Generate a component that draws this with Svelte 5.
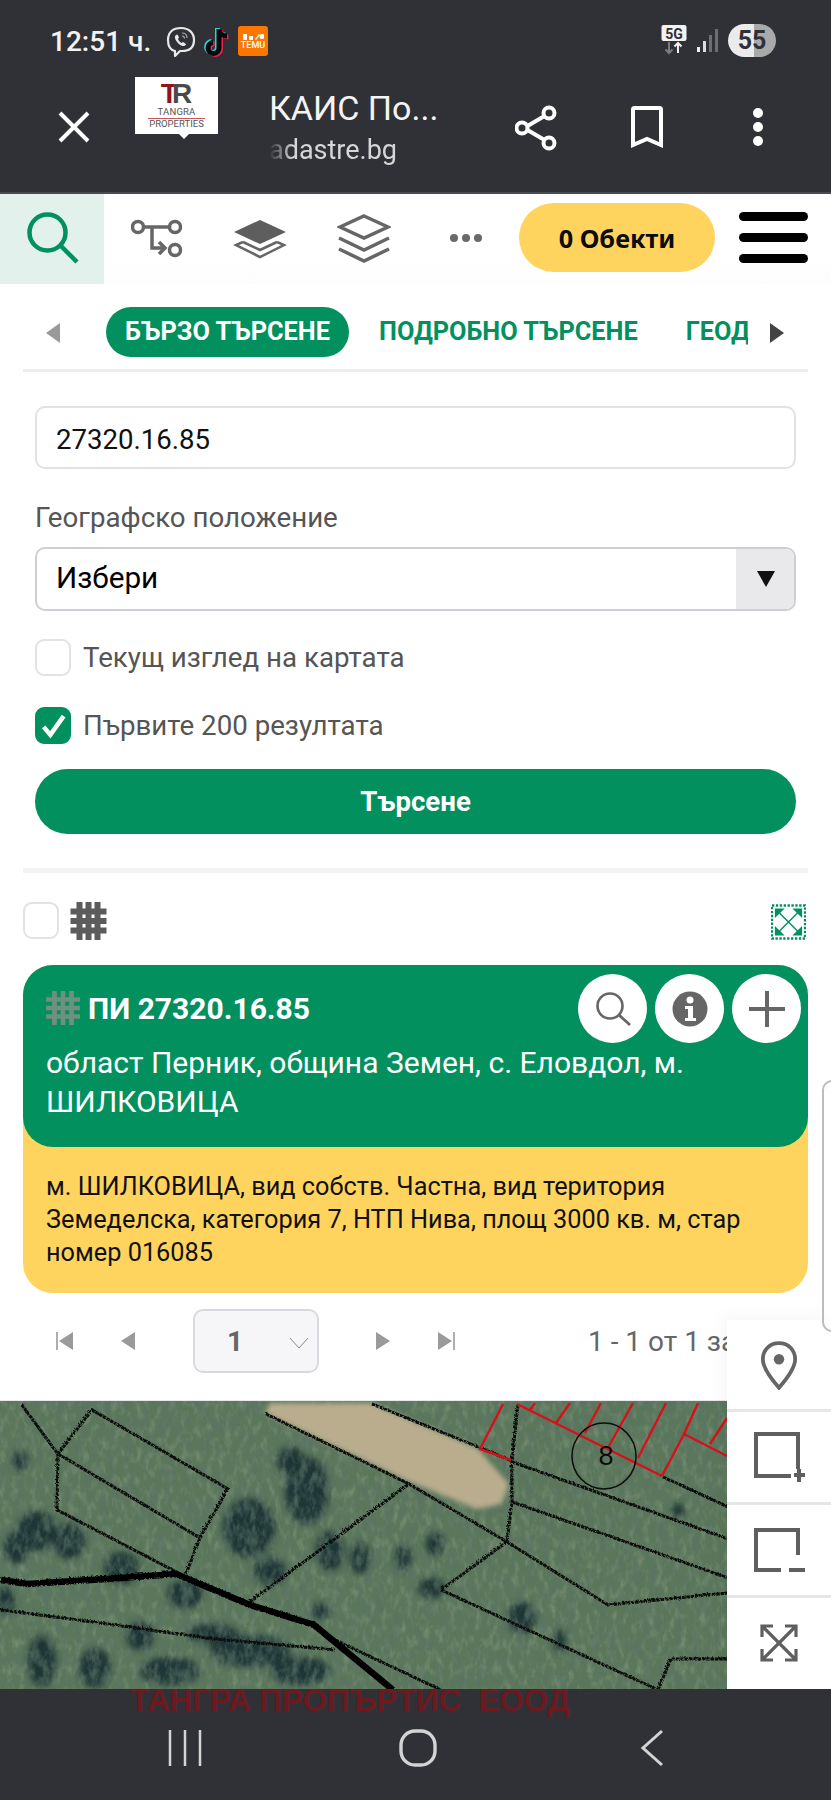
<script>
  const thin = [
    'M21 3L57 52L91 8L227 87L199 136L185 172','M57 52L199 136','M57 52L56 108L185 175',
    'M249 200L408 82','M265 12L408 82L506 140','M371 2L482 47L511 59','M517 3L511 60L511 100L506 140',
    'M506 140L440 188L657 288','M506 140L607 203L727 191','M511 100L727 176','M511 60L727 137','M662 75L727 105',
    'M657 288L670 257L727 257','M0 208L106 222L212 237L334 248','M323 233L440 288'
  ];
  const red = [
    'M517 3L662 75','M503 3L480 48L511 59','M662 75L684 33L727 55','M535 2L530 9','M570 2L556 22','M601 2L585 32',
    'M633 2L609 45','M666 2L638 57','M698 2L684 33','M727 17L710 43'
  ];
  const trees = [
    [249,127,26,30],[307,90,22,34],[37,130,20,20],[16,147,12,16],[69,140,16,18],[122,167,18,16],[291,60,14,14],
    [360,157,10,16],[403,157,8,14],[435,143,9,12],[432,187,14,10],[522,217,14,16],[42,260,14,26],[95,267,16,20],
    [212,233,26,10],[5,200,10,14],[185,193,18,14],[678,110,6,8],[140,235,14,14],[320,210,10,8],[250,250,40,16],[560,240,6,12],
    [330,150,14,20],[20,60,8,10],[270,170,16,14],[170,270,30,14],[300,270,30,14]
  ];
</script>

<div class="page">
  <header class="chrome">
    <div class="status">
      <span class="time">12:51 ч.</span>
      <svg class="st-icon viber" viewBox="0 0 30 32"><path d="M15 2C7 2 2 6 2 14c0 6 2 10 7 11v5l5-5h2c8 0 12-4 12-11S23 2 15 2z" fill="none" stroke="#e8e8e8" stroke-width="2.2" stroke-linejoin="round"/><path d="M10 9c-1.500 1-1.500 3 0 5.500s4 5 6.500 5.500c2 .5 3.500-1 3.500-2l-3-2-1.500 1c-1.500-.8-3-2.500-3.500-4l1-1.500-1.500-3z" fill="#e8e8e8"/><path d="M16 7c3 0 5 2 5 5M16 10c1.500 0 2.500 1 2.500 2.500" fill="none" stroke="#aaa" stroke-width="1.200"/></svg>
      <svg class="st-icon tiktok" viewBox="0 0 28 32"><g fill="none" stroke-width="5"><path d="M16 3v19a5.500 5.500 0 1 1-6-5.500M16 3c0 4 3 7 8 7" stroke="#25d5dc" transform="translate(-1.500 -1)"/><path d="M16 3v19a5.500 5.500 0 1 1-6-5.500M16 3c0 4 3 7 8 7" stroke="#e9234e" transform="translate(1.500 1)"/><path d="M16 3v19a5.500 5.500 0 1 1-6-5.500M16 3c0 4 3 7 8 7" stroke="#0a0a0c"/></g></svg>
      <div class="temu">
        <svg viewBox="0 0 22 7" width="22" height="7"><g fill="#fff"><rect x="1" y="1" width="4" height="6"/><rect x="7" y="3" width="4" height="4"/><path d="M13 6l4-5 1 1-4 5z"/><circle cx="20" cy="3.500" r="2.500"/></g></svg>
        <b>TEMU</b>
      </div>
      <span class="spacer"></span>
      <svg class="net" viewBox="0 0 26 30"><rect x="0.500" y="0" width="25" height="16" rx="2" fill="#f2f2f2"/><text x="13" y="13.500" text-anchor="middle" class="net-t">5G</text><path d="M8 17v11M4.500 24.500L8 28l3.500-3.500" fill="none" stroke="#7c7c7c" stroke-width="2"/><path d="M17 28V18M13.500 21.500L17 18l3.500 3.500" fill="none" stroke="#f2f2f2" stroke-width="2"/></svg>
      <svg class="signal" viewBox="0 0 22 24"><rect x="0" y="18" width="3" height="5" fill="#eee"/><rect x="6" y="12" width="3" height="11" fill="#ddd"/><rect x="12" y="6" width="3" height="17" fill="#6d6e72"/><rect x="18" y="0" width="3" height="23" fill="#6d6e72"/></svg>
      <div class="battery">55</div>
    </div>
    <div class="browser">
      <svg class="close" viewBox="0 0 32 32"><path d="M2 2L30 30M30 2L2 30" stroke="#fff" stroke-width="4"/></svg>
      <div class="logo">
        <div class="tr"><span class="t">T</span><span class="r">R</span></div>
        <div class="lt">TANGRA</div>
        <div class="lb">PROPERTIES</div>
      </div>
      <div class="titles">
        <div class="title">КАИС По...</div>
        <div class="url">adastre.bg</div>
      </div>
      <svg class="act share" viewBox="0 0 42 46"><g fill="none" stroke="#fff" stroke-width="4"><path d="M33 9L9 23L33 37"/><circle cx="34" cy="8" r="5.500" fill="#303136"/><circle cx="7" cy="23" r="5.500" fill="#303136"/><circle cx="34" cy="38" r="5.500" fill="#303136"/></g></svg>
      <svg class="act book" viewBox="0 0 32 42"><path d="M2 3.500Q2 2 3.500 2h25Q30 2 30 3.500V39l-14-6-14 6z" fill="none" stroke="#fff" stroke-width="4"/></svg>
      <div class="kebab"><i></i><i></i><i></i></div>
    </div>
  </header>

  <nav class="toolbar">
    <div class="tool active">
      <svg viewBox="0 0 54 54" class="ti-search"><circle cx="20.500" cy="20.500" r="18" fill="none" stroke="#03905f" stroke-width="4.500"/><path d="M33 33L50 50" stroke="#03905f" stroke-width="4.500"/></svg>
    </div>
    <div class="tool">
      <svg viewBox="0 0 52 40" class="ti-route"><g fill="none" stroke="#666" stroke-width="3.500"><circle cx="7" cy="8" r="5.500"/><circle cx="44" cy="8" r="5.500"/><circle cx="44" cy="31" r="5.500"/><path d="M13 8H38M21 8V29H34M28 23l6 6-6 6"/></g></svg>
    </div>
    <div class="tool">
      <svg viewBox="0 0 54 40" class="ti-layer"><path d="M27 1L53 13L27 25L1 13z" fill="#5e5e5e"/><path d="M10 23L27 31L44 23M10 23L3 26L27 38L51 26L44 23" fill="none" stroke="#666" stroke-width="2.500"/></svg>
    </div>
    <div class="tool">
      <svg viewBox="0 0 54 50" class="ti-stack"><g fill="none" stroke="#666" stroke-width="3.500"><path d="M27 3L51 14L27 25L3 14z"/><path d="M2 25L27 37L52 25M2 36L27 48L52 36"/></g></svg>
    </div>
    <div class="tool more"><i></i><i></i><i></i></div>
    <button class="objects">0 Обекти</button>
    <div class="burger"><i></i><i></i><i></i></div>
  </nav>

  <main class="content">
    <div class="tabs">
      <span class="tri left"></span>
      <div class="tablist">
        <span class="tab on">БЪРЗО ТЪРСЕНЕ</span>
        <span class="tab">ПОДРОБНО ТЪРСЕНЕ</span>
        <span class="tab">ГЕОД</span>
      </div>
      <span class="tri right"></span>
    </div>

    <form class="form">
      <div class="input">27320.16.85</div>
      <div class="label">Географско положение</div>
      <div class="input select"><span>Избери</span><span class="sel-arrow"></span></div>
      <div class="check first"><span class="box"></span><span>Текущ изглед на картата</span></div>
      <div class="check second">
        <span class="box on"><svg viewBox="0 0 24 24"><path d="M5 13l5 6L20 5" fill="none" stroke="#fff" stroke-width="3.400"/></svg></span>
        <span>Първите 200 резултата</span>
      </div>
      <div class="submit">Търсене</div>
    </form>

    <div class="divider"></div>

    <div class="selrow">
      <span class="box"></span>
      <svg class="grid" viewBox="0 0 36 38"><path d="M9 0v38M18 0v38M27 0v38M0 9.500h36M0 19h36M0 28.500h36" stroke="#5c5c5c" stroke-width="6"/></svg>
      <span class="spacer"></span>
      <svg class="expand" viewBox="0 0 36 36"><rect x="1" y="1" width="34" height="34" fill="none" stroke="#03905f" stroke-width="2.400" stroke-dasharray="2.400 1.600"/><path d="M8 8L28 28M28 8L8 28" stroke="#03905f" stroke-width="1.500"/><path d="M4 4h10L4 14zM32 4H22l10 10zM4 32h10L4 22zM32 32H22l10-10z" fill="#03905f"/></svg>
    </div>

    <section class="card">
      <div class="card-head">
        <div class="head-title">
          <svg class="hgrid" viewBox="0 0 36 36"><path d="M9 0v36M18 0v36M27 0v36M0 9h36M0 18h36M0 27h36" stroke="#6f8f80" stroke-width="5"/></svg>
          <span>ПИ 27320.16.85</span>
        </div>
        <p>област Перник, община Земен, с. Еловдол, м.<br />ШИЛКОВИЦА</p>
        <div class="round-btns">
          <span class="round"><svg viewBox="0 0 36 36" width="36" height="36"><circle cx="15" cy="15" r="12.500" fill="none" stroke="#666" stroke-width="2.600"/><path d="M24 24L35 34" stroke="#666" stroke-width="2.800"/></svg></span>
          <span class="round"><svg viewBox="0 0 36 36" width="36" height="36"><circle cx="18" cy="18" r="17.500" fill="#666"/><circle cx="18" cy="9" r="3.500" fill="#fff"/><path d="M13 15h8v12h3v3H13v-3h3v-9h-3z" fill="#fff"/></svg></span>
          <span class="round"><svg viewBox="0 0 36 36" width="36" height="36"><path d="M18 0v36M0 18h36" stroke="#666" stroke-width="4"/></svg></span>
        </div>
      </div>
      <div class="card-body">м. ШИЛКОВИЦА, вид собств. Частна, вид територия Земеделска, категория 7, НТП Нива, площ 3000 кв. м, стар номер 016085</div>
    </section>

    <div class="pager">
      <svg class="pg p1" viewBox="0 0 18 20"><path d="M1 1v18" stroke="#9a9a9a" stroke-width="1.600"/><path d="M17 1v18L3 10z" fill="#9a9a9a"/></svg>
      <svg class="pg p2" viewBox="0 0 15 20"><path d="M15 1v18L1 10z" fill="#9a9a9a"/></svg>
      <div class="page-sel"><span>1</span><svg viewBox="0 0 20 12" width="20" height="12"><path d="M1 1l9 10 9-10" fill="none" stroke="#888" stroke-width="1"/></svg></div>
      <svg class="pg p3" viewBox="0 0 15 20"><path d="M0 1v18l14-9z" fill="#9a9a9a"/></svg>
      <svg class="pg p4" viewBox="0 0 18 20"><path d="M1 1v18l14-9z" fill="#9a9a9a"/><path d="M17 1v18" stroke="#9a9a9a" stroke-width="1.600"/></svg>
      <span class="count">1 - 1 от 1 за</span>
    </div>
  </main>

  <div class="mapwrap">
    <svg class="map" viewBox="0 0 727 288" preserveAspectRatio="none">
      <defs>
        <filter id="noise" x="0" y="0" width="100%" height="100%">
          <feTurbulence type="fractalNoise" baseFrequency="0.16 0.08" numOctaves="4" seed="7" />
          <feColorMatrix values="0 0 0 0 0.62  0 0 0 0 0.7  0 0 0 0 0.58  2.400 0 0 0 -1.100" />
        </filter>
        <filter id="dark" x="0" y="0" width="100%" height="100%">
          <feTurbulence type="fractalNoise" baseFrequency="0.12 0.06" numOctaves="4" seed="21" />
          <feColorMatrix values="0 0 0 0 0.1  0 0 0 0 0.17  0 0 0 0 0.13  3.400 0 0 0 -1.500" />
        </filter>
        <filter id="rough" x="-2%" y="-2%" width="104%" height="104%">
          <feTurbulence type="turbulence" baseFrequency="0.45" numOctaves="2" seed="3" result="t" />
          <feDisplacementMap in="SourceGraphic" in2="t" scale="3" />
        </filter>
        <filter id="blur"><feGaussianBlur stdDeviation="3.500" /></filter>
        <filter id="blur2"><feGaussianBlur stdDeviation="2.500" /></filter>
      </defs>
      <rect width="727" height="288" fill="#5b775b" />
      <g filter="url(#blur)" fill="#1c3436">
        {#each trees as t}<ellipse cx={t[0]} cy={t[1]} rx={t[2]} ry={t[3]} />{/each}
      </g>
      <rect width="727" height="288" filter="url(#noise)" opacity="0.22" />
      <rect width="727" height="288" filter="url(#dark)" opacity="0.6" />
      <polygon points="270,2 371,2 477,47 509,83 501,103 477,108 408,80 265,12" fill="#b9ad8e" filter="url(#blur2)" />
      <g filter="url(#rough)">
        <g fill="none" stroke="#090b09" stroke-width="3" stroke-dasharray="3.500 0.800">
          {#each thin as d}<path d={d} />{/each}
        </g>
        <path d="M0 178L26 182L106 177L175 172L249 203L313 223L392 288" fill="none" stroke="#040504" stroke-width="6.500" />
      </g>
      <g fill="none" stroke="#d8101a" stroke-width="2.400">
        {#each red as d}<path d={d} />{/each}
      </g>
      <ellipse cx="604" cy="55" rx="32" ry="33" fill="none" stroke="#0b0b0b" stroke-width="1.500" />
      <text x="606" y="64" text-anchor="middle" class="map-8">8</text>
    </svg>
  </div>

  <aside class="sidepanel">
    <div class="side s1"><svg viewBox="0 0 40 52" width="38" height="50"><path d="M20 3C9.500 3 3 11 3 20c0 9 10 22 17 30 7-8 17-21 17-30C37 11 30.500 3 20 3z" fill="none" stroke="#666" stroke-width="4"/><circle cx="20" cy="20" r="5.500" fill="#666"/></svg></div>
    <div class="side s2"><svg viewBox="0 0 52 52" width="52" height="52"><path d="M45 38V3H3v42h35" fill="none" stroke="#5f5f5f" stroke-width="4"/><path d="M41 44h11M46 38v13" stroke="#5f5f5f" stroke-width="4"/></svg></div>
    <div class="side s3"><svg viewBox="0 0 52 46" width="52" height="46"><path d="M45 28V3H3v40h25" fill="none" stroke="#5f5f5f" stroke-width="4"/><path d="M36 43h16" stroke="#5f5f5f" stroke-width="4"/></svg></div>
    <div class="side s4"><svg viewBox="0 0 38 38" width="38" height="38"><g fill="none" stroke="#5f5f5f" stroke-width="3.200"><path d="M2 13V2h11M25 2h11v11M2 25v11h11M36 25v11H25M3 3l32 32M35 3L3 35"/></g></svg></div>
  </aside>
  <div class="scrollstub"></div>

  <footer class="navbar">
    <div class="watermark">ТАНГРА ПРОПЪРТИС  ЕООД</div>
    <div class="navicons">
      <svg class="n-recent" viewBox="0 0 34 36"><path d="M2 0v36M17 0v36M32 0v36" stroke="#d4d4d4" stroke-width="2.500"/></svg>
      <svg class="n-home" viewBox="0 0 38 38"><rect x="2" y="2" width="34" height="34" rx="14" fill="none" stroke="#d4d4d4" stroke-width="3.400"/></svg>
      <svg class="n-back" viewBox="0 0 24 38"><path d="M22 2L3 19l19 17" fill="none" stroke="#d4d4d4" stroke-width="3"/></svg>
    </div>
  </footer>
</div>

<style>
  :global(body) { margin: 0; background: #fff; }
  .page {
    position: relative;
    width: 831px;
    height: 1800px;
    overflow: hidden;
    display: flex;
    flex-direction: column;
    font-family: Roboto, "Liberation Sans", sans-serif;
    color: #111;
    background: #fff;
  }
  .spacer { flex: 1; }

  /* chrome */
  .chrome { height: 192px; background: #303136; border-bottom: 2px solid #4a4b50; box-sizing: content-box; flex: none; }
  .status { height: 64px; padding: 24px 55px 0 50px; box-sizing: border-box; display: flex; align-items: flex-start; color: #f2f2f2; }
  .time { font-size: 28px; font-weight: 500; line-height: 32px; margin-top: 2px; width: 116px; white-space: nowrap; }
  .st-icon.viber { width: 30px; height: 32px; margin-top: 2px; }
  .st-icon.tiktok { width: 28px; height: 32px; margin: 2px 0 0 7px; }
  .temu { width: 30px; height: 30px; margin: 2px 0 0 7px; background: #fb7701; border-radius: 3px; display: flex; flex-direction: column; align-items: center; color: #fff; justify-content: center; gap: 1px; }
  .temu b { font-size: 9px; font-weight: 500; line-height: 9px; letter-spacing: 0.100px; }
  .net { width: 26px; height: 30px; margin: 1px 0 0 0; }
  .net-t { font: 700 14px Roboto, sans-serif; fill: #303136; }
  .signal { width: 22px; height: 24px; margin: 5px 0 0 10px; }
  .battery { width: 48px; height: 33px; margin: 0 0 0 9px; border-radius: 17px; background: linear-gradient(90deg, #ebebeb 0 54%, #a9a9a9 54%); color: #303136; font-size: 25px; font-weight: 700; line-height: 33px; text-align: center; }

  .browser { height: 128px; position: relative; display: flex; }
  .close { width: 32px; height: 32px; margin: 47px 0 0 58px; flex: none; }
  .logo { width: 83px; height: 57px; margin: 13px 0 0 45px; background: #fff; flex: none; position: relative; text-align: center; color: #555; }
  .logo::after { content: ""; position: absolute; left: 44px; bottom: -5px; border: 5px solid transparent; border-bottom: 0; border-top-color: #fff; }
  .tr { font: 700 28px/22px "Liberation Sans", sans-serif; height: 22px; padding-top: 6px; letter-spacing: -6px; margin-left: -6px; }
  .tr .t { color: #8f1518; }
  .tr .r { color: #4a4a4a; }
  .lt { font-size: 9.500px; line-height: 10px; margin-top: 2px; letter-spacing: 0.200px; }
  .lb { font-size: 9.500px; line-height: 10px; border-top: 1px solid #c55; margin: 1px 13px 0; white-space: nowrap; display: flex; justify-content: center; }
  .titles { margin-left: 51px; width: 170px; flex: none; }
  .title { font-size: 34px; line-height: 40px; color: #f4f4f4; margin-top: 24px; white-space: nowrap; }
  .url { font-size: 27px; line-height: 32px; color: #d6d6d6; margin-top: 6px; -webkit-mask-image: linear-gradient(90deg, transparent 0, #000 24px); mask-image: linear-gradient(90deg, transparent 0, #000 24px); }
  .act { flex: none; }
  .share { width: 42px; height: 46px; margin: 41px 0 0 76px; }
  .book { width: 32px; height: 42px; margin: 42px 0 0 74px; }
  .kebab { margin: 44px 0 0 90px; display: flex; flex-direction: column; gap: 4px; }
  .kebab i { width: 10px; height: 10px; border-radius: 50%; background: #fff; }

  /* toolbar */
  .toolbar { height: 90px; display: flex; align-items: flex-start; flex: none; background: linear-gradient(180deg, #fff 70%, #fdfdfd); position: relative; }
  .tool { height: 90px; width: 104px; display: flex; align-items: center; justify-content: center; flex: none; }
  .tool.active { background: #e3f1ec; }
  .ti-search { width: 54px; height: 54px; margin-left: 4px; }
  .ti-route { width: 52px; height: 40px; margin-left: 2px; }
  .ti-layer { width: 54px; height: 40px; }
  .ti-stack { width: 54px; height: 50px; margin-top: -3px; }
  .more { width: 100px; gap: 4px; margin-top: -1px; }
  .more i { width: 8px; height: 8px; border-radius: 50%; background: #6a6a6a; }
  .objects { width: 196px; height: 69px; margin: 9px 0 0 3px; border: 0; border-radius: 35px; background: #ffd45e; color: #0b0b0b; font: 700 25.300px "Noto Sans", sans-serif; padding: 0; flex: none; }
  .burger { margin: 18px 0 0 24px; display: flex; flex-direction: column; gap: 12px; }
  .burger i { width: 69px; height: 9px; border-radius: 5px; background: #000; display: block; }

  /* content */
  .content { height: 1116px; padding: 0 23px; box-sizing: border-box; flex: none; overflow: hidden; }
  .tabs { height: 85px; border-bottom: 3px solid #eee; display: flex; align-items: flex-start; position: relative; box-sizing: content-box; }
  .tablist { position: absolute; left: 83px; top: 23px; width: 642px; height: 50px; overflow: hidden; display: flex; align-items: center; white-space: nowrap; font-weight: 700; font-size: 25.300px; color: #03905f; }
  .tab { height: 50px; line-height: 50px; flex: none; }
  .tab.on { background: #03905f; color: #fff; border-radius: 25px; width: 243px; text-align: center; margin-right: 30px; }
  .tab.on + .tab { margin-right: 48px; }
  .tri { position: absolute; top: 39px; border: 9px solid transparent; border-top-width: 10px; border-bottom-width: 10px; }
  .tri.left { left: 23px; border-left: 0; border-right: 14px solid #999; }
  .tri.right { left: 747px; border-right: 0; border-left: 14px solid #444; }

  .form { padding: 0 12px; }
  .input { height: 63px; border: 2px solid #e2e2e4; border-radius: 10px; box-sizing: border-box; margin-top: 34px; padding-left: 19px; font-size: 27.600px; line-height: 64px; color: #111; position: relative; background: #fff; overflow: hidden; }
  .label { font-size: 27.700px; line-height: 32px; color: #555; margin-top: 33px; }
  .input.select { margin-top: 13px; height: 64px; border-color: #ccd0d6; color: #000; font-size: 29.700px; line-height: 58px; }
  .sel-arrow { position: absolute; right: 0; top: 0; width: 58px; height: 100%; background: #e9e9eb; }
  .sel-arrow::after { content: ""; position: absolute; left: 21px; top: 22px; border: 9px solid transparent; border-bottom: 0; border-top: 16px solid #111; }
  .check { display: flex; align-items: center; gap: 12px; font-size: 27.700px; color: #555; height: 37px; }
  .check.first { margin-top: 28px; }
  .check.second { margin-top: 31px; }
  .box { width: 36px; height: 37px; box-sizing: border-box; border: 2px solid #e2e2e4; border-radius: 9px; background: #fff; flex: none; display: block; }
  .box.on { background: #03905f; border-color: #03905f; }
  .box.on svg { display: block; width: 32px; height: 33px; }
  .submit { height: 65px; margin-top: 25px; border-radius: 33px; background: #03905f; color: #fff; font-size: 27.600px; font-weight: 700; line-height: 65px; text-align: center; }

  .divider { height: 5px; background: #f3f3f3; margin-top: 34px; }
  .selrow { height: 37px; display: flex; margin-top: 29px; align-items: flex-start; }
  .grid { width: 37px; height: 38px; margin-left: 11px; }
  .expand { width: 35px; height: 36px; margin: 2px 2px 0 0; }

  .card { margin-top: 26px; background: #ffd45e; border-radius: 30px; height: 328px; }
  .card-head { position: relative; height: 182px; background: #03905f; border-radius: 30px; color: #fff; padding: 25px 23px 0 23px; box-sizing: border-box; }
  .head-title { display: flex; align-items: center; gap: 8px; font-size: 30px; font-weight: 700; height: 36px; white-space: nowrap; }
  .hgrid { width: 34px; height: 36px; flex: none; }
  .card-head p { margin: 17px 0 0; font-size: 30px; line-height: 39px; white-space: nowrap; }
  .round-btns { position: absolute; top: 9px; right: 7px; display: flex; gap: 8px; }
  .round { width: 69px; height: 69px; border-radius: 50%; background: #fff; display: flex; align-items: center; justify-content: center; }
  .card-body { padding: 23px 24px 0 23px; font-size: 25.300px; line-height: 33px; color: #111; }

  .pager { height: 64px; margin-top: 16px; display: flex; align-items: center; position: relative; white-space: nowrap; }
  .pg { height: 20px; flex: none; }
  .p1 { width: 18px; margin-left: 33px; }
  .p2 { width: 15px; margin-left: 46px; }
  .page-sel { width: 126px; height: 64px; margin-left: 58px; box-sizing: border-box; border: 2px solid #d6dae0; border-radius: 10px; background: #f6f6f8; display: flex; align-items: center; justify-content: space-between; padding: 0 8px 0 32px; color: #666; font-size: 28px; font-weight: 700; }
  .page-sel svg { margin-top: 4px; }
  .p3 { width: 15px; margin-left: 57px; }
  .p4 { width: 18px; margin-left: 46px; }
  .count { margin-left: 133px; font-size: 28px; color: #666; }

  /* map */
  .mapwrap { height: 288px; flex: none; border-top: 1px solid #e8e8e8; box-sizing: content-box; }
  .map { display: block; width: 727px; height: 288px; }
  .map-8 { font: 400 27px "Liberation Sans", sans-serif; fill: #0b0b0b; }

  .sidepanel { position: absolute; left: 727px; top: 1320px; width: 104px; height: 368px; background: #fff; display: flex; flex-direction: column; box-shadow: -6px -6px 14px rgba(0,0,0,.03); }
  .side { display: flex; align-items: center; justify-content: center; box-sizing: border-box; border-bottom: 3px solid #e6e6e6; flex: none; }
  .s1 { height: 92px; }
  .s2 { height: 93px; }
  .s3 { height: 93px; }
  .s4 { height: 90px; border-bottom: 0; }
  .scrollstub { position: absolute; left: 822px; top: 1080px; width: 20px; height: 252px; border: 2px solid #bcbcbc; border-radius: 10px; box-sizing: border-box; }

  /* nav */
  .navbar { flex: 1; background: #303136; position: relative; }
  .watermark { position: absolute; left: 130px; top: -5px; font: 700 31.300px/34px "Liberation Sans", sans-serif; color: #6b1a1f; white-space: pre; }
  .navicons { padding-top: 40px; display: flex; align-items: center; }
  .n-recent { width: 34px; height: 36px; margin-left: 168px; }
  .n-home { width: 38px; height: 38px; margin-left: 197px; }
  .n-back { width: 24px; height: 38px; margin-left: 203px; }
</style>
